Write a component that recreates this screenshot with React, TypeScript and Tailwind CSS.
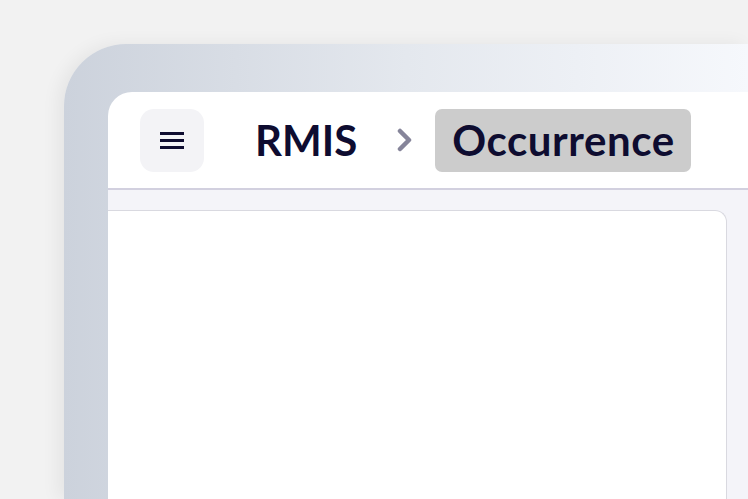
export default function App() {
  return (
    <div className="w-[748px] h-[499px] overflow-hidden bg-[#f2f2f2] pt-[44px] pl-[64px] flex">
      {/* device frame */}
      <div className="flex-1 flex rounded-tl-[62px] bg-gradient-to-r from-[#ccd2dc] via-[#e4e8ee] to-[#f6f8fc] pt-[48px] pl-[44px] shadow-[-6px_0_18px_rgba(0,0,0,0.06)]">
        <div className="flex-1 flex flex-col bg-white rounded-tl-[24px] overflow-hidden">
          <header className="h-[98px] shrink-0 flex items-center pl-[32px] border-b-2 border-[#d2d0df]">
            <button className="w-[64px] h-[63px] rounded-[14px] bg-[#f3f3f6] flex flex-col items-center justify-center gap-[4px]">
              <span className="block w-[24px] h-[3px] bg-[#0e0c30]" />
              <span className="block w-[24px] h-[3px] bg-[#0e0c30]" />
              <span className="block w-[24px] h-[3px] bg-[#0e0c30]" />
            </button>
            <span
              className="ml-[51px] text-[42px] font-bold text-[#0e0c30] leading-none"
              style={{ fontFamily: 'Lato, "Noto Sans", sans-serif' }}
            >
              RMIS
            </span>
            <svg className="ml-[40px]" width="16" height="24" viewBox="0 0 16 24" fill="none">
              <path d="M3 3l9 9-9 9" stroke="#86859a" strokeWidth="4.5" strokeLinejoin="round" strokeLinecap="round" />
            </svg>
            <span
              className="ml-[22px] h-[63px] flex items-center pl-[17px] pr-[16px] rounded-[7px] bg-[#cccccc] text-[42px] font-bold tracking-[0.6px] text-[#0e0c30] leading-none"
              style={{ fontFamily: 'Lato, "Noto Sans", sans-serif' }}
            >
              Occurrence
            </span>
          </header>
          <main className="flex-1 bg-[#f4f4f9] pt-[20px] pr-[21px]">
            <div className="h-full bg-white border border-l-0 border-b-0 border-[#d9d9e0] rounded-tr-[12px]" />
          </main>
        </div>
      </div>
    </div>
  );
}
